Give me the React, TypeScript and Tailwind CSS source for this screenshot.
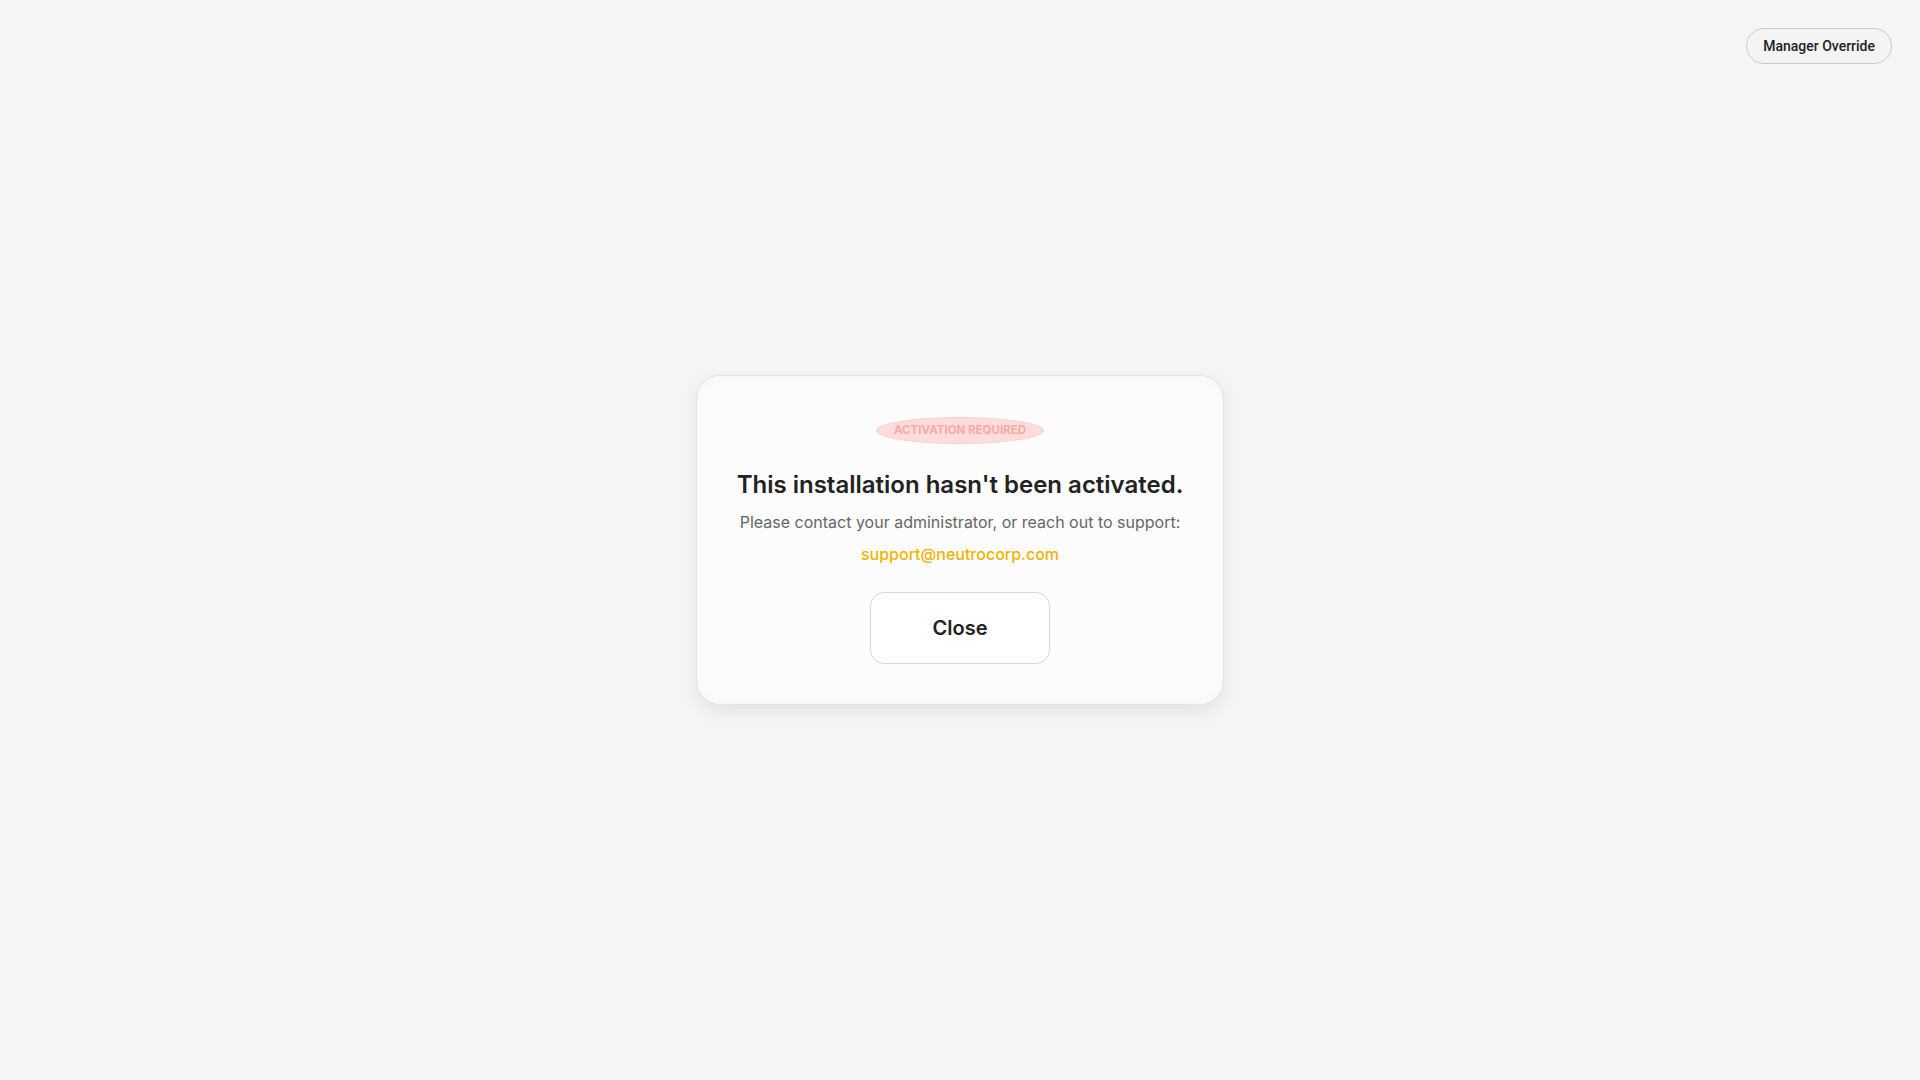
export default function App() {
  return (
    <div className="relative flex min-h-screen items-center justify-center bg-[#f5f5f5] font-['Inter',sans-serif]">
      <button
        type="button"
        className="absolute right-[28px] top-[28px] h-[36px] rounded-full border border-[#c9c9c9] bg-[#f4f4f4] px-[16px] font-['Roboto',sans-serif] text-[14px] font-medium text-[#222]"
      >
        Manager Override
      </button>

      <div className="flex flex-col items-center rounded-[24px] border border-[#e3e3e3] bg-[#fcfcfc] px-[40px] pb-[40px] pt-[41px] shadow-[0_6px_18px_rgba(0,0,0,0.08),inset_0_0_16px_rgba(0,0,0,0.025)]">
        <span className="flex h-[27px] items-center rounded-[50%] border border-[#fcd0d0] bg-[#fddcdc] px-[17px] text-[11.5px] font-bold uppercase text-[#fba9a9]">
          Activation Required
        </span>
        <h1 className="mt-[25px] text-[24px] font-semibold leading-[32px] text-[#222]">
          This installation hasn&apos;t been activated.
        </h1>
        <p className="mt-[9px] text-[16px] leading-[24px] text-[#666]">
          Please contact your administrator, or reach out to support:
        </p>
        <a className="mt-[8px] text-[16px] font-medium leading-[24px] text-[#f0b400]" href="#">
          support@neutrocorp.com
        </a>
        <button
          type="button"
          className="mt-[26px] h-[72px] w-[180px] rounded-[14px] border border-[#d6d6d6] bg-white text-[20px] font-semibold text-[#222]"
        >
          Close
        </button>
      </div>
    </div>
  );
}
